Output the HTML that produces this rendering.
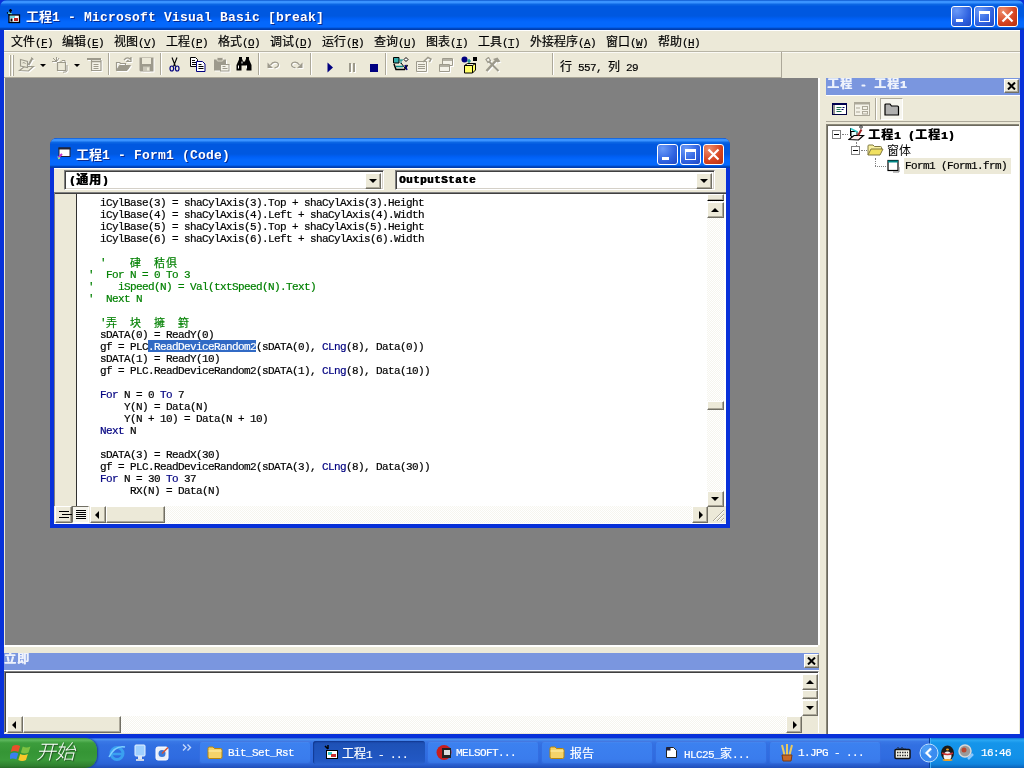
<!DOCTYPE html>
<html lang="zh-CN">
<head>
<meta charset="utf-8">
<title>工程1 - Microsoft Visual Basic [break]</title>
<style>
*{box-sizing:border-box;margin:0;padding:0}
html,body{width:1024px;height:768px;overflow:hidden;background:#0a3fd6}
body{position:relative;font-family:"Liberation Mono","Noto Sans CJK SC",monospace;font-size:12px;color:#000}
.abs{position:absolute}
.ui{font-family:"Liberation Mono","Noto Sans CJK SC",monospace;font-size:11px;letter-spacing:-0.6px;-webkit-text-stroke:.2px}
.cjk{font-family:"Noto Sans CJK SC",sans-serif;font-size:12px;letter-spacing:0}
/* main window frame */
#frame{left:0;top:0;width:1024px;height:738px;background:#0831d9}
#title{left:0;top:0;width:1024px;height:30px;border-radius:7px 7px 0 0;
 background:linear-gradient(#0a54cc 0,#3a93ff 1.5px,#3a93ff 2.5px,#0b66e4 4.5px,#0058e0 6.5px,#0058e0 16px,#0060f6 19px,#0468fc 22px,#0468fc 27px,#0048c0 28.5px,#0038a8 30px)}
#title .t{left:26px;top:8px;color:#fff;font-weight:bold;font-size:13px;letter-spacing:0.2px;white-space:nowrap;line-height:16px;text-shadow:1px 1px 0 #0a2a90}
.cb{top:6px;width:21px;height:21px;border:1px solid #fff;border-radius:3px;background:radial-gradient(circle at 25% 20%,#6a9af8,#2f62e0 60%,#2048c0)}
.cb.x{background:radial-gradient(circle at 25% 20%,#ee8d6c,#d5421e 60%,#b5300f)}
#menubar{left:4px;top:30px;width:1016px;height:21px;will-change:transform}
#menubar>span{position:absolute;top:3px;white-space:nowrap;line-height:15px}
#toolbar{left:4px;top:51px;width:1016px;height:27px;background:#ece9d8;border-top:1px solid #b8b5a6;box-shadow:inset 0 1px 0 #fbfaf5}
#mdi{left:5px;top:78px;width:813px;height:567px;background:#808080}
#client{left:4px;top:30px;width:1016px;height:704px;background:#ece9d8;border-top:1px solid #fff}

/* code window */
#cw{left:50px;top:138px;width:680px;height:390px;background:#0831d9;border-radius:7px 7px 0 0}
#cwt{left:0;top:0;width:680px;height:30px;border-radius:7px 7px 0 0;
 background:linear-gradient(#0a54cc 0,#3a93ff 1.5px,#3a93ff 2.5px,#0b66e4 4.5px,#0058e0 6.5px,#0058e0 16px,#0060f6 19px,#0468fc 22px,#0468fc 27px,#0048c0 28.5px,#0038a8 30px)}
#cwt .t{left:26px;top:8px;color:#fff;font-weight:bold;font-size:13px;letter-spacing:0.2px;white-space:nowrap;line-height:16px;text-shadow:1px 1px 0 #0a2a90}
#cwc{left:4px;top:30px;width:672px;height:356px;background:#ece9d8;box-shadow:inset 0 1px 0 #fff}
.combo{top:2px;height:20px;background:#fff;border:1px solid;border-color:#808080 #fff #fff #808080;box-shadow:inset 1px 1px 0 #404040,inset -1px -1px 0 #d4d0c8}
.combo .tx{left:4px;top:1px;white-space:nowrap;line-height:13px}
.btn{background:#ece9d8;border:1px solid;border-color:#fff #716f64 #716f64 #fff;box-shadow:inset -1px -1px 0 #aca899}
.tri-d{width:0;height:0;border:4px solid transparent;border-top:4px solid #000;border-bottom:0}
.tri-u{width:0;height:0;border:4px solid transparent;border-bottom:4px solid #000;border-top:0}
.tri-l{width:0;height:0;border:4px solid transparent;border-right:4px solid #000;border-left:0}
.tri-r{width:0;height:0;border:4px solid transparent;border-left:4px solid #000;border-right:0}
#code{left:0;top:24px;width:672px;height:314px;background:#fff;border-top:1px solid #808080;border-left:1px solid #808080;box-shadow:inset 0 1px 0 #404040}
#margin{left:0;top:1px;width:22px;height:312px;background:#ece9d8;border-right:1px solid #303030}
.sbtrack{background-color:#f6f5ee;background-image:linear-gradient(45deg,#fff 25%,transparent 25%,transparent 75%,#fff 75%),linear-gradient(45deg,#fff 25%,transparent 25%,transparent 75%,#fff 75%);background-size:2px 2px;background-position:0 0,1px 1px}
pre.src{will-change:transform;position:absolute;left:33px;top:4px;font-family:"Liberation Mono","Noto Sans CJK SC",monospace;font-size:11px;letter-spacing:-0.6px;line-height:12px;white-space:pre;color:#000;-webkit-text-stroke:.2px}
pre.src .g{color:#008000}
pre.src .k{color:#000080}
pre.src .c{font-family:"Noto Sans CJK SC",sans-serif;font-size:11px;letter-spacing:0;display:inline-block;width:12px;line-height:12px;vertical-align:top;position:relative;top:-1px}
pre.src .sel{position:relative;color:#fff}
pre.src .sel:before{content:"";position:absolute;left:0;right:0;top:-1px;height:12px;background:#316ac5;z-index:-1}

/* scrollbars in code window */
#vsb{left:652px;top:1px;width:17px;height:313px}
#hrow{left:0;top:338px;width:672px;height:18px;background:#ece9d8;border-bottom:1px solid #fff}
/* project panel */
#pp{left:826px;top:78px;width:194px;height:656px;background:#ece9d8}
.ptitle{background:#7a96df;color:#eef2fc;text-shadow:.5px 0 0 #eef2fc;font-weight:bold;white-space:nowrap;overflow:hidden}
#tree{left:0;top:46px;width:193px;height:610px;background:#fff;border-top:1px solid #8a8778;border-left:1px solid #8a8778;box-shadow:inset 1px 1px 0 #6b695e}
.tr{white-space:nowrap;line-height:14px;height:14px}
.pm{width:9px;height:9px;border:1px solid #808080;background:#fff}
.pm:after{content:"";position:absolute;left:1px;top:3px;width:5px;height:1px;background:#000}
/* immediate */
#imm{left:4px;top:645px;width:816px;height:89px;background:#ece9d8}

/* taskbar */
#tb{left:0;top:738px;width:1024px;height:30px;background:linear-gradient(#2a5fd0 0,#4a8ff0 1.5px,#3a78e6 3.5px,#3270e2 7px,#2f6be0 20px,#2a62d4 26px,#1f4db8 30px)}
#start{left:0;top:0;width:97px;height:30px;border-radius:0 12px 12px 0;background:linear-gradient(#3f8f3f 0,#5eb85e 2px,#3c9d3c 5px,#359535 14px,#3a9a3a 22px,#2f7f2f 28px,#266a26 30px);box-shadow:1px 0 2px #1b3f8f}
#start .t{left:36px;top:0px;color:#fff;font-family:"Noto Sans CJK SC",sans-serif;font-size:20px;font-style:italic;font-weight:300;line-height:26px;letter-spacing:-1px;white-space:nowrap;text-shadow:1px 1px 1px #254f25}
.tk{top:3px;width:112px;height:23px;border-radius:3px;background:linear-gradient(#5a92ee 0,#3c81f0 2px,#3a7ced 18px,#3472e0 23px);color:#fff;box-shadow:inset 0 0 0 1px rgba(40,80,200,.35)}
.tk.on{background:linear-gradient(#1b47a8 0,#1e52b7 3px,#2258c4 20px,#2b62cc 23px);box-shadow:inset 1px 1px 1px #123a94}
.tk .tx{left:29px;top:5px;white-space:nowrap;line-height:14px;color:#fff}
#tray{left:929px;top:0;width:95px;height:30px;background:linear-gradient(#0e75d4 0,#2aa7f3 2px,#1595ea 5px,#1290e8 20px,#0f84de 26px,#0b62b8 30px);border-left:1px solid #0a3f9a;box-shadow:inset 1px 0 0 #3fb0f5}

#toolbar .sep{position:absolute;top:1px;width:2px;height:22px;border-left:1px solid #aca899;border-right:1px solid #fff}
#toolbar svg{position:absolute}
.dis{opacity:.55}

.b,.b .ui,.b .cjk{font-weight:bold}
.combo .tx,.tr .b{text-shadow:.5px 0 0 #000}
.b.ui,.b .ui{letter-spacing:.4px}
.b.cjk,.b .cjk{letter-spacing:1px}

#title .t,#cwt .t,.combo .tx,.tr,.tk .tx,#start .t,.ga,.ptitle>div:first-child{will-change:transform}
.dz{filter:drop-shadow(1px 1px 0 #fff)}
</style>
</head>
<body>
<div id="frame" class="abs"></div>
<div id="client" class="abs"></div>
<div id="title" class="abs">
  <svg class="abs" style="left:6px;top:8px" width="15" height="16" viewBox="0 0 15 16"><path d="M1 4.5l3 2.5M4.5 1v5M3 2.5l3 0" stroke="#000" stroke-width="1.3"/><path d="M2 5l4 1" stroke="#6cc" stroke-width="1.5"/><rect x="3" y="7" width="10.5" height="7.5" fill="#fff" stroke="#000" stroke-width="1.3"/><rect x="4" y="8" width="5" height="2" fill="#7dd"/><rect x="8" y="10" width="4" height="3" fill="#b22"/><rect x="4.5" y="10.5" width="2" height="3" fill="#000"/></svg>
  <div class="abs t"><span class="cjk" style="font-weight:bold;font-size:13px">工程</span>1 - Microsoft Visual Basic [break]</div>
  <div class="abs cb" style="left:951px"><div class="abs" style="left:4px;top:12px;width:7px;height:3px;background:#fff"></div></div>
  <div class="abs cb" style="left:974px"><div class="abs" style="left:4px;top:4px;width:11px;height:11px;border:1px solid #fff;border-top-width:3px"></div></div>
  <div class="abs cb x" style="left:997px"><svg class="abs" style="left:3px;top:3px" width="13" height="13" viewBox="0 0 13 13"><path d="M1.5 1.5l10 10M11.5 1.5l-10 10" stroke="#fff" stroke-width="2.2"/></svg></div>
</div>
<div id="menubar" class="abs ui"><span style="left:7px"><span class="cjk">文件</span>(<u>F</u>)</span><span style="left:58px"><span class="cjk">编辑</span>(<u>E</u>)</span><span style="left:110px"><span class="cjk">视图</span>(<u>V</u>)</span><span style="left:162px"><span class="cjk">工程</span>(<u>P</u>)</span><span style="left:214px"><span class="cjk">格式</span>(<u>O</u>)</span><span style="left:266px"><span class="cjk">调试</span>(<u>D</u>)</span><span style="left:318px"><span class="cjk">运行</span>(<u>R</u>)</span><span style="left:370px"><span class="cjk">查询</span>(<u>U</u>)</span><span style="left:422px"><span class="cjk">图表</span>(<u>I</u>)</span><span style="left:474px"><span class="cjk">工具</span>(<u>T</u>)</span><span style="left:526px"><span class="cjk">外接程序</span>(<u>A</u>)</span><span style="left:602px"><span class="cjk">窗口</span>(<u>W</u>)</span><span style="left:654px"><span class="cjk">帮助</span>(<u>H</u>)</span></div>
<div id="toolbar" class="abs"><div class="abs" style="left:5px;top:3px;width:1px;height:21px;background:#fff;box-shadow:1px 0 0 #aca899,3px 0 0 #fff,4px 0 0 #aca899"></div><svg class="dz" style="left:14px;top:5px" width="17" height="16" viewBox="0 0 17 16"><path d="M1.5 13.5l5-4h9l-5 4.5z" fill="#ece9d8" stroke="#9d9a8c" stroke-width="1.2"/><path d="M2.5 2.5l7 2v6l-7-1.5z" fill="#ece9d8" stroke="#9d9a8c" stroke-width="1.2"/><path d="M4.5 6q2-1.5 3 1" fill="none" stroke="#9d9a8c"/><path d="M14.5 1l-4 7" stroke="#9d9a8c" stroke-width="2"/><path d="M13 0.5l2.5 2" stroke="#9d9a8c"/></svg><div class="abs tri-d" style="left:36px;top:12px;border-width:3px;border-top-width:3px"></div><svg class="dz" style="left:48px;top:5px" width="17" height="16" viewBox="0 0 17 16"><path d="M1 1l3.5 3.5M4.5 0v5M0 4.5h5M7 1l-2 3" stroke="#9d9a8c" stroke-width="1"/><path d="M5.5 5.5h8v8h-8z" fill="#ece9d8" stroke="#9d9a8c" stroke-width="1.2"/><path d="M8 5.5l2-2h3v2" fill="none" stroke="#9d9a8c"/><path d="M15 8v6l-2.5 1.5M11 15.5l1.5-1" stroke="#9d9a8c" fill="none"/></svg><div class="abs tri-d" style="left:70px;top:12px;border-width:3px;border-top-width:3px"></div><svg class="dz" style="left:83px;top:6px" width="15" height="13" viewBox="0 0 15 13"><path d="M0 1h14" stroke="#9d9a8c" stroke-width="2"/><path d="M4.5 2v10.5h9.5v-10.5" fill="#f4f2e8" stroke="#9d9a8c" stroke-width="1.2"/><path d="M4.5 3.5h9.5" stroke="#9d9a8c" stroke-width="1.5"/><path d="M6.5 6.5h5M6.5 8.5h5M6.5 10.5h5" stroke="#9d9a8c" stroke-width="1"/></svg><div class="sep" style="left:104px"></div><svg class="dz" style="left:111px;top:5px" width="17" height="15" viewBox="0 0 17 15"><path d="M9 3q3-3.5 6-1l1 -1.5v4h-4l1.5-1.5" fill="none" stroke="#9d9a8c" stroke-width="1.2"/><path d="M1.5 13.5v-8h3l1 1h5v2" fill="none" stroke="#9d9a8c" stroke-width="1.2"/><path d="M1.5 13.5l3-5h11l-3.5 5z" fill="#9d9a8c" stroke="#9d9a8c"/></svg><svg class="dz" style="left:135px;top:5px" width="15" height="15" viewBox="0 0 15 15"><path d="M0.5 0.5h14v14h-13l-1-1z" fill="#9d9a8c"/><rect x="3" y="1" width="9" height="6" fill="#ece9d8"/><rect x="4" y="9.5" width="7" height="5" fill="#c9c6b8"/><rect x="8" y="10.5" width="2" height="3" fill="#ece9d8"/></svg><div class="sep" style="left:156px"></div><svg style="left:165px;top:5px" width="11" height="15" viewBox="0 0 11 15"><path d="M3 0.5l3.5 9M8 0.5l-3.5 9" stroke="#000" stroke-width="1.1" fill="none"/><ellipse cx="2.8" cy="11.5" rx="1.8" ry="2.5" fill="none" stroke="#000080" stroke-width="1.2"/><ellipse cx="8.2" cy="11.5" rx="1.8" ry="2.5" fill="none" stroke="#000080" stroke-width="1.2"/></svg><svg style="left:186px;top:5px" width="16" height="15" viewBox="0 0 16 15"><path d="M0.5 0.5h5l2 2v7h-7z" fill="#fff" stroke="#000" stroke-width="1"/><path d="M2 3.5h3M2 5.5h4M2 7.5h4" stroke="#000" stroke-width="1"/><path d="M6.5 4.5h6l2.5 2.5v7.5h-8.5z" fill="#fff" stroke="#000080" stroke-width="1"/><path d="M8.5 7.5h3M8.5 9.5h5M8.5 11.5h5" stroke="#000" stroke-width="1"/></svg><svg class="dz" style="left:209px;top:5px" width="17" height="15" viewBox="0 0 17 15"><path d="M1 2.5h12v11h-12z" fill="#9d9a8c"/><rect x="4" y="0.5" width="6" height="3.5" rx="1" fill="#9d9a8c" stroke="#ece9d8" stroke-width=".8"/><rect x="7.5" y="7.5" width="8.5" height="6.5" fill="#f4f2e8" stroke="#9d9a8c"/><path d="M9.5 9.5h3M9.5 11.5h5" stroke="#9d9a8c"/></svg><svg style="left:232px;top:5px" width="16" height="14" viewBox="0 0 16 14"><path d="M3 0h3v3h-3zM10 0h3v3h-3z" fill="#000"/><path d="M0.5 8l2.5-5.5h3.5l.5 2h2l.5-2h3.5l2.5 5.5v5.5h-5v-5h-5v5h-5z" fill="#000"/><path d="M2.5 8.5v3M10.5 8.5v3M6 4.5v2" stroke="#fff"/></svg><div class="sep" style="left:254px"></div><svg class="dz" style="left:263px;top:8px" width="13" height="9" viewBox="0 0 13 9"><path d="M0.5 2.5v5.5h5.5z" fill="#9d9a8c"/><path d="M3.5 5q2.5-4 6.5-2.5q3 2 0 4.5l-2.5 1" fill="none" stroke="#9d9a8c" stroke-width="1.3"/></svg><svg class="dz" style="left:286px;top:8px" width="13" height="9" viewBox="0 0 13 9"><path d="M12.5 2.5v5.5h-5.5z" fill="#9d9a8c"/><path d="M9.5 5q-2.5-4-6.5-2.5q-3 2 0 4.5l2.5 1" fill="none" stroke="#9d9a8c" stroke-width="1.3"/></svg><div class="sep" style="left:306px"></div><svg style="left:323px;top:10px" width="7" height="11" viewBox="0 0 7 11"><path d="M0.5 0.5l5.5 5-5.5 5z" fill="#000080"/></svg><svg class="dz" style="left:345px;top:11px" width="7" height="9" viewBox="0 0 7 9"><path d="M1 0v9M5 0v9" stroke="#9d9a8c" stroke-width="2"/></svg><div class="abs" style="left:366px;top:12px;width:8px;height:8px;background:#000080"></div><div class="sep" style="left:381px"></div><svg style="left:388px;top:4px" width="17" height="17" viewBox="0 0 17 17"><path d="M1.5 1.5h5.5v5.5h-5.5z" fill="#3aa" stroke="#000"/><path d="M7 4h4M9 4v4" stroke="#088"/><path d="M2 8l2 5.5h8.5l3-4.5" fill="none" stroke="#000" stroke-width="1.5"/><path d="M4 10.5h7" stroke="#088" stroke-width="1.5"/><path d="M9 7l4 5" stroke="#000"/><path d="M14 1.5l2 2-2 2-2-2z" stroke="#000" fill="#fff"/><path d="M13 9l2 5" stroke="#000080" stroke-width="1.5"/></svg><svg class="dz" style="left:411px;top:4px" width="17" height="17" viewBox="0 0 17 17"><path d="M1.5 5.5h10v10h-10z" fill="#f4f2e8" stroke="#9d9a8c"/><path d="M3 8.5h7M3 10.5h7M3 12.5h7" stroke="#9d9a8c"/><path d="M8 6l5-4.5 3 1.5-1.5 3" fill="none" stroke="#9d9a8c" stroke-width="1.5"/></svg><svg class="dz" style="left:434px;top:6px" width="16" height="15" viewBox="0 0 16 15"><path d="M4.5 0.5h10v7h-10z" fill="#f4f2e8" stroke="#9d9a8c"/><path d="M1.5 6.5h10v7h-10z" fill="#f4f2e8" stroke="#9d9a8c"/><path d="M4.5 2h10M1.5 8h10" stroke="#9d9a8c" stroke-width="1.5"/></svg><svg style="left:457px;top:4px" width="17" height="18" viewBox="0 0 17 18"><circle cx="3.5" cy="3.5" r="3" fill="#000080"/><rect x="12" y="1" width="4" height="4" fill="#000"/><path d="M8 3v4M6 5h4" stroke="#088" stroke-width="1.2"/><path d="M3.5 9.5h8l3-2v6.5l-3 3h-8z" fill="#ffff66" stroke="#000"/><path d="M3.5 9.5l3-2h8M11.5 9.5v7.5" fill="none" stroke="#000"/></svg><svg class="dz" style="left:480px;top:5px" width="17" height="16" viewBox="0 0 17 16"><path d="M2.5 14l10-11" stroke="#9d9a8c" stroke-width="2.5"/><path d="M9 2l4.5-1.5 3 4-3 1z" fill="#9d9a8c"/><path d="M14.5 14l-9.5-9.5" stroke="#9d9a8c" stroke-width="2"/><path d="M2 2.5l2.5-2 2 3-2.5 2z" fill="none" stroke="#9d9a8c" stroke-width="1.3"/></svg><div class="sep" style="left:548px"></div><div class="abs ui ga" style="left:556px;top:7px;line-height:14px;white-space:nowrap"><span class="cjk">行</span> 557, <span class="cjk">列</span> 29</div><div class="abs" style="left:777px;top:0;width:1px;height:26px;background:#aca899"></div><div class="abs" style="left:0;top:25px;width:778px;height:1px;background:#aca899"></div></div>
<div id="mdi" class="abs"></div>
<div id="cw" class="abs">
 <div id="cwt" class="abs"><svg class="abs" style="left:7px;top:9px" width="14" height="13" viewBox="0 0 14 13"><rect x="2" y="1" width="11" height="8.5" fill="#fff" stroke="#223" stroke-width="1"/><rect x="1.5" y="0.5" width="12" height="2" fill="#223"/><path d="M1 11l4-4" stroke="#c3c" stroke-width="2"/><path d="M1 11.5l2-.5" stroke="#ee4" stroke-width="1.5"/><path d="M0.5 9.5l2 2.5" stroke="#4cc" stroke-width="1"/></svg><div class="abs t"><span class="cjk" style="font-weight:bold;font-size:13px">工程</span>1 - Form1 (Code)</div>
  <div class="abs cb" style="left:607px"><div class="abs" style="left:4px;top:12px;width:7px;height:3px;background:#fff"></div></div>
  <div class="abs cb" style="left:630px"><div class="abs" style="left:4px;top:4px;width:11px;height:11px;border:1px solid #fff;border-top-width:3px"></div></div>
  <div class="abs cb x" style="left:653px"><svg class="abs" style="left:3px;top:3px" width="13" height="13" viewBox="0 0 13 13"><path d="M1.5 1.5l10 10M11.5 1.5l-10 10" stroke="#fff" stroke-width="2.2"/></svg></div>
 </div>
 <div id="cwc" class="abs">
  <div class="abs combo" style="left:10px;width:320px"><div class="abs tx ui b">(<span class="cjk">通用</span>)</div>
    <div class="abs btn" style="right:2px;top:2px;width:16px;height:16px"><div class="abs tri-d" style="left:3px;top:5px"></div></div></div>
  <div class="abs combo" style="left:341px;width:320px"><div class="abs tx ui b" style="left:3px;top:3px">OutputState</div>
    <div class="abs btn" style="right:2px;top:2px;width:16px;height:16px"><div class="abs tri-d" style="left:3px;top:5px"></div></div></div>
  <div id="hrow" class="abs">
   <div class="abs btn" style="left:1px;top:0;width:17px;height:17px"><div class="abs" style="left:3px;top:4px;width:10px;height:1px;background:#000;box-shadow:3px 3px 0 #000,0 6px 0 #000"></div></div>
   <div class="abs" style="left:18px;top:0;width:17px;height:17px;background:#f6f5ee;border:1px solid;border-color:#716f64 #fff #fff #716f64"><div class="abs" style="left:3px;top:3px;width:10px;height:1px;background:#000;box-shadow:0 2px 0 #000,0 4px 0 #000,0 6px 0 #000,0 8px 0 #000"></div></div>
   <div class="abs sbtrack" style="left:36px;top:0;width:618px;height:17px">
     <div class="abs btn" style="left:0;top:0;width:16px;height:17px"><div class="abs tri-l" style="left:4px;top:4px"></div></div>
     <div class="abs btn" style="left:16px;top:0;width:59px;height:17px"></div>
     <div class="abs btn" style="right:0;top:0;width:16px;height:17px"><div class="abs tri-r" style="left:6px;top:4px"></div></div>
   </div>
   <svg class="abs" style="left:658px;top:3px" width="13" height="13" viewBox="0 0 13 13"><path d="M12 1L1 12M12 5L5 12M12 9L9 12" stroke="#aca899" stroke-width="1"/><path d="M12 2L2 12M12 6L6 12M12 10L10 12" stroke="#fff" stroke-width="1"/></svg>
  </div>
  <div id="code" class="abs">
   <div id="margin" class="abs"></div>
   <div id="vsb" class="abs sbtrack">
    <div class="abs btn" style="left:0;top:0;width:17px;height:7px;border-bottom-color:#000"></div>
    <div class="abs btn" style="left:0;top:8px;width:17px;height:16px"><div class="abs tri-u" style="left:3px;top:5px"></div></div>
    <div class="abs btn" style="left:0;top:207px;width:17px;height:9px"></div>
    <div class="abs btn" style="left:0;top:297px;width:17px;height:16px"><div class="abs tri-d" style="left:3px;top:5px"></div></div>
   </div>
<pre class="src">  iCylBase(3) = shaCylAxis(3).Top + shaCylAxis(3).Height
  iCylBase(4) = shaCylAxis(4).Left + shaCylAxis(4).Width
  iCylBase(5) = shaCylAxis(5).Top + shaCylAxis(5).Height
  iCylBase(6) = shaCylAxis(6).Left + shaCylAxis(6).Width

<span class="g">  '    <span class="c">硉</span>  <span class="c">秸</span><span class="c">俱</span></span>
<span class="g">'  For N = 0 To 3</span>
<span class="g">'    iSpeed(N) = Val(txtSpeed(N).Text)</span>
<span class="g">'  Next N</span>

<span class="g">  '<span class="c">弄</span>  <span class="c">块</span>  <span class="c">擁</span>  <span class="c">篈</span></span>
  sDATA(0) = ReadY(0)
  gf = PLC<span class="sel">.ReadDeviceRandom2</span>(sDATA(0), <span class="k">CLng</span>(8), Data(0))
  sDATA(1) = ReadY(10)
  gf = PLC.ReadDeviceRandom2(sDATA(1), <span class="k">CLng</span>(8), Data(10))

  <span class="k">For</span> N = 0 <span class="k">To</span> 7
      Y(N) = Data(N)
      Y(N + 10) = Data(N + 10)
  <span class="k">Next</span> N

  sDATA(3) = ReadX(30)
  gf = PLC.ReadDeviceRandom2(sDATA(3), <span class="k">CLng</span>(8), Data(30))
  <span class="k">For</span> N = 30 <span class="k">To</span> 37
       RX(N) = Data(N)</pre>
  </div>
 </div>
</div>
<div class="abs" style="left:818px;top:78px;width:2px;height:567px;background:#fff"></div>
<div id="pp" class="abs">
 <div class="abs ptitle" style="left:0;top:0;width:194px;height:17px"><div class="abs" style="left:1px;top:-2px;line-height:14px"><span class="b"><span class="cjk">工程</span><span class="ui"> - </span><span class="cjk">工程</span><span class="ui">1</span></span></div>
  <div class="abs btn" style="left:178px;top:1px;width:15px;height:14px"><svg class="abs" style="left:2px;top:2px" width="9" height="8" viewBox="0 0 9 8"><path d="M1 0.5L8 7.5M8 0.5L1 7.5" stroke="#000" stroke-width="2"/></svg></div>
 </div>
 <div class="abs" style="left:0;top:17px;width:194px;height:1px;background:#fff"></div>
 <div class="abs" style="left:0;top:43px;width:194px;height:1px;background:#aca899"></div>

 <svg class="abs" style="left:6px;top:25px" width="15" height="12" viewBox="0 0 15 12"><rect x="0.5" y="0.5" width="14" height="11" fill="#fff" stroke="#000040"/><rect x="0" y="0" width="15" height="2" fill="#000050"/><rect x="1" y="2" width="2" height="9" fill="#909090"/><path d="M4.5 4.5h5M4.5 6.5h4M4.5 8.5h5" stroke="#207050" stroke-width="1"/><path d="M10.5 4.5h2M9.5 6.5h2" stroke="#000060"/></svg>
 <svg class="abs" style="left:28px;top:24px" width="16" height="14" viewBox="0 0 16 14"><rect x="0.5" y="0.5" width="15" height="13" fill="#f4f2e8" stroke="#aca899"/><rect x="0" y="0" width="16" height="2.5" fill="#aca899"/><path d="M2 6h4M2 10h4" stroke="#aca899"/><rect x="8.5" y="4.5" width="5" height="3" fill="none" stroke="#aca899"/><rect x="8.5" y="9.5" width="5" height="2.5" fill="none" stroke="#aca899"/></svg>
 <div class="abs" style="left:49px;top:20px;width:2px;height:22px;border-left:1px solid #aca899;border-right:1px solid #fff"></div>
 <div class="abs" style="left:54px;top:20px;width:23px;height:22px;background:#f6f5ee;border:1px solid;border-color:#aca899 #fff #fff #aca899"></div>
 <svg class="abs" style="left:58px;top:24px" width="16" height="14" viewBox="0 0 16 14"><path d="M1 13v-10q0-1 1-1h4l1.5 2h6q1 0 1 1v8z" fill="#b0b0b0" stroke="#000" stroke-width="1.2"/></svg>
 <div id="tree" class="abs">
  <div class="abs pm" style="left:5px;top:5px"></div>
  <div class="abs" style="left:15px;top:9px;width:6px;border-top:1px dotted #808080"></div>
  <svg class="abs" style="left:21px;top:0" width="17" height="17" viewBox="0 0 17 17"><path d="M2.5 3v8" stroke="#000"/><path d="M3 6.5h6v5h-6z" fill="#eaffff" stroke="#000"/><path d="M2.5 3.5l7 3.5" stroke="#3cc" stroke-width="1.5"/><path d="M1 14.5l5-4h9.5l-5 4.5z" fill="#fdeeee" stroke="#000" stroke-width="1.2"/><path d="M13.5 4.5l-3.5 6" stroke="#a02020" stroke-width="2"/><path d="M13 0.5l1.5 1.5-1.5 1.5-1.5-1.5z" fill="#fff" stroke="#000"/></svg>
  <div class="abs tr" style="left:41px;top:2px;font-weight:bold"><span class="b"><span class="cjk">工程</span><span class="ui">1 (</span><span class="cjk">工程</span><span class="ui">1)</span></span></div>
  <div class="abs" style="left:29px;top:17px;height:8px;border-left:1px dotted #808080"></div>
  <div class="abs pm" style="left:24px;top:21px"></div>
  <div class="abs" style="left:34px;top:25px;width:6px;border-top:1px dotted #808080"></div>
  <svg class="abs" style="left:40px;top:18px" width="17" height="14" viewBox="0 0 17 14"><path d="M1 12v-9q0-1 1-1h4l1.5 1.5h6q1 0 1 1v2" fill="#f8f0a0" stroke="#807840"/><path d="M1 12l3-6h12l-3 6z" fill="#f0e060" stroke="#807840"/></svg>
  <div class="abs tr cjk" style="left:60px;top:18px">窗体</div>
  <div class="abs" style="left:48px;top:33px;height:8px;border-left:1px dotted #808080"></div>
  <div class="abs" style="left:48px;top:41px;width:11px;border-top:1px dotted #808080"></div>
  <svg class="abs" style="left:60px;top:34px" width="14" height="14" viewBox="0 0 14 14"><rect x="1" y="1.5" width="10" height="10" fill="#fff" stroke="#000" stroke-width="1.2"/><path d="M1 2.5h10" stroke="#088" stroke-width="2"/><path d="M12 8v5h-6" stroke="#808080" fill="none"/></svg>
  <div class="abs" style="left:77px;top:33px;width:107px;height:16px;background:#ece9d8"></div>
  <div class="abs tr ui" style="left:78px;top:34px">Form1 (Form1.frm)</div>
</div>
</div>
<div id="imm" class="abs">
 <div class="abs ptitle" style="left:0;top:8px;width:815px;height:17px"><div class="abs cjk b" style="left:0;top:-2px;line-height:14px">立即</div>
  <div class="abs btn" style="left:800px;top:1px;width:15px;height:14px"><svg class="abs" style="left:2px;top:2px" width="9" height="8" viewBox="0 0 9 8"><path d="M1 0.5L8 7.5M8 0.5L1 7.5" stroke="#000" stroke-width="2"/></svg></div>
 </div>
 <div class="abs" style="left:0;top:0;width:814px;height:2px;background:#fff"></div>
 <div class="abs" style="left:0;top:25px;width:815px;height:1px;background:#fff"></div>
 <div class="abs" style="left:0;top:26px;width:815px;height:62px;background:#fff;border:1px solid;border-color:#808080 #fff #fff #808080;box-shadow:inset 1px 1px 0 #404040">
  <div class="abs sbtrack" style="left:797px;top:2px;width:16px;height:42px">
    <div class="abs btn" style="left:0;top:0;width:16px;height:16px"><div class="abs tri-u" style="left:3px;top:5px"></div></div>
    <div class="abs btn" style="left:0;top:16px;width:16px;height:9px"></div>
    <div class="abs btn" style="left:0;top:26px;width:16px;height:16px"><div class="abs tri-d" style="left:3px;top:5px"></div></div>
  </div>
  <div class="abs sbtrack" style="left:2px;top:44px;width:795px;height:17px">
    <div class="abs btn" style="left:0;top:0;width:16px;height:17px"><div class="abs tri-l" style="left:4px;top:4px"></div></div>
    <div class="abs btn" style="left:16px;top:0;width:98px;height:17px"></div>
    <div class="abs btn" style="right:0;top:0;width:16px;height:17px"><div class="abs tri-r" style="left:6px;top:4px"></div></div>
  </div>
  <div class="abs" style="left:797px;top:44px;width:16px;height:17px;background:#ece9d8"></div>
 </div>
</div>
<div id="tb" class="abs">
<div id="start" class="abs"><svg class="abs" style="left:10px;top:5px" width="23" height="18" viewBox="0 0 18 18" preserveAspectRatio="none"><path d="M2 3q3-2 6 0l-1.5 6q-3-2-6 0z" fill="#e8502a"/><path d="M10 3.5q3 2 6 0l-1.5 6q-3 2-6 0z" fill="#7dc242"/><path d="M0.5 10.5q3-2 6 0l-1.5 6q-3-2-6 0z" fill="#3b7ff0"/><path d="M8 11q3 2 6 0l-1.5 6q-3 2-6 0z" fill="#f9c82a"/></svg><div class="abs t">开始</div></div>
<svg class="abs" style="left:108px;top:6px" width="18" height="18" viewBox="0 0 18 18"><circle cx="9" cy="9.5" r="6" fill="none" stroke="#3aa0f0" stroke-width="3"/><path d="M4 10h11" stroke="#3aa0f0" stroke-width="2.5"/><path d="M1 13q6-12 16-10" fill="none" stroke="#7fd0ff" stroke-width="1.5"/></svg>
<svg class="abs" style="left:133px;top:6px" width="14" height="18" viewBox="0 0 14 18"><rect x="2" y="1" width="10" height="11" rx="1" fill="#9fd0ff" stroke="#e8f4ff"/><rect x="5" y="12" width="4" height="3" fill="#dfe8f4"/><rect x="3" y="15" width="8" height="2" fill="#c8d4e8"/></svg>
<svg class="abs" style="left:154px;top:6px" width="17" height="18" viewBox="0 0 17 18"><rect x="2" y="3" width="12" height="13" rx="2" fill="#e8eef8" stroke="#fff"/><circle cx="8" cy="9.5" r="3.5" fill="#3a78d8"/><path d="M8 9.5l6-6" stroke="#d85030" stroke-width="1.5"/></svg>
<svg class="abs" style="left:182px;top:6px" width="10" height="7" viewBox="0 0 10 7"><path d="M1 0.5l3 3-3 3M5.5 0.5l3 3-3 3" fill="none" stroke="#c4d8fa" stroke-width="1.4"/></svg>
<div class="abs tk" style="left:199px"><svg class="abs" style="left:8px;top:4px" width="16" height="15" viewBox="0 0 16 15"><path d="M1 3.5q0-1.5 1.5-1.5h3.5l1.5 1.5h6q1.5 0 1.5 1.5v7q0 1.5-1.5 1.5h-11q-1.5 0-1.5-1.5z" fill="#f5d36a" stroke="#b8860b" stroke-width="1"/><path d="M1.5 6h13" stroke="#fff2b0" stroke-width="1"/></svg><div class="abs tx ui">Bit_Set_Rst</div></div>
<div class="abs tk on" style="left:313px"><svg class="abs" style="left:10px;top:3px" width="16" height="17" viewBox="0 0 16 17"><path d="M2 2l3 3M5 1v4" stroke="#000" stroke-width="1.5"/><rect x="3.5" y="6.5" width="11" height="8" fill="#fff" stroke="#000"/><rect x="5" y="8" width="4" height="3" fill="#3cc"/><rect x="8" y="10" width="5" height="3" fill="#c33"/></svg><div class="abs tx ui"><span class="cjk">工程</span>1 - ...</div></div>
<div class="abs tk" style="left:427px"><svg class="abs" style="left:9px;top:3px" width="17" height="17" viewBox="0 0 17 17"><circle cx="8" cy="8.5" r="7.5" fill="#c81e1e"/><rect x="6" y="4" width="9" height="10" fill="#222"/><rect x="8" y="6" width="6" height="5" fill="#ddd"/></svg><div class="abs tx ui">MELSOFT...</div></div>
<div class="abs tk" style="left:541px"><svg class="abs" style="left:8px;top:4px" width="16" height="15" viewBox="0 0 16 15"><path d="M1 3.5q0-1.5 1.5-1.5h3.5l1.5 1.5h6q1.5 0 1.5 1.5v7q0 1.5-1.5 1.5h-11q-1.5 0-1.5-1.5z" fill="#f5d36a" stroke="#b8860b" stroke-width="1"/><path d="M1.5 6h13" stroke="#fff2b0" stroke-width="1"/></svg><div class="abs tx ui"><span class="cjk">报告</span></div></div>
<div class="abs tk" style="left:655px"><svg class="abs" style="left:10px;top:5px" width="13" height="13" viewBox="0 0 13 13"><path d="M1.5 1.5h7l3 3v7h-10z" fill="#fff" stroke="#222"/><path d="M1.5 1.5h4v3h-4z" fill="#224"/></svg><div class="abs tx ui">HLC25_<span class="cjk">家</span>...</div></div>
<div class="abs tk" style="left:769px"><svg class="abs" style="left:10px;top:2px" width="16" height="19" viewBox="0 0 16 19"><path d="M3 2l3 12M8 1v13M13 2l-3 12" stroke="#e8c860" stroke-width="2"/><path d="M3 12h10l-1 6h-8z" fill="#c86a28" stroke="#7a3a10"/></svg><div class="abs tx ui">1.JPG - ...</div></div>
<svg class="abs" style="left:894px;top:8px" width="17" height="14" viewBox="0 0 17 14"><path d="M3 2.5q1-2 2 0t2 0t2 0t2 0" fill="none" stroke="#111" stroke-width="1"/><rect x="1" y="3.5" width="15" height="9" rx="1" fill="#f4f4e8" stroke="#111" stroke-width="1.5"/><path d="M3 6.5h11M3 9.5h11" stroke="#333" stroke-width="1.5" stroke-dasharray="1.5 1"/></svg>
<div id="tray" class="abs"></div>
<svg class="abs" style="left:919px;top:5px" width="20" height="20" viewBox="0 0 20 20"><circle cx="10" cy="10" r="9" fill="#3a8cf0" stroke="#bfe0ff" stroke-width="1"/><circle cx="8" cy="7" r="5" fill="#5aa8f8" opacity=".6"/><path d="M12 5.5l-4.5 4.5 4.5 4.5" fill="none" stroke="#fff" stroke-width="2.2"/></svg>
<svg class="abs" style="left:940px;top:6px" width="15" height="17" viewBox="0 0 15 17"><ellipse cx="7.5" cy="9" rx="6.5" ry="7.5" fill="#1a1a1a"/><ellipse cx="7.5" cy="12" rx="4" ry="4.5" fill="#f4f4f4"/><ellipse cx="7.5" cy="5.5" rx="1.5" ry="1" fill="#f0a020"/><path d="M2 9q5.5 3 11 0" stroke="#c83030" stroke-width="1.5" fill="none"/><ellipse cx="7.5" cy="16" rx="5" ry="1" fill="#f0a020"/></svg>
<svg class="abs" style="left:958px;top:5px" width="17" height="19" viewBox="0 0 17 19"><circle cx="7" cy="8" r="6" fill="#9a9a9a" stroke="#d8d8d8" stroke-width="1.5"/><circle cx="6" cy="7" r="2.5" fill="#b84830"/><path d="M10 16l5-5" stroke="#8ac8ff" stroke-width="2.5"/></svg>
<div class="abs ui ga" style="left:981px;top:8px;color:#fff;line-height:14px;white-space:nowrap">16:46</div>
</div>
</body>
</html>
